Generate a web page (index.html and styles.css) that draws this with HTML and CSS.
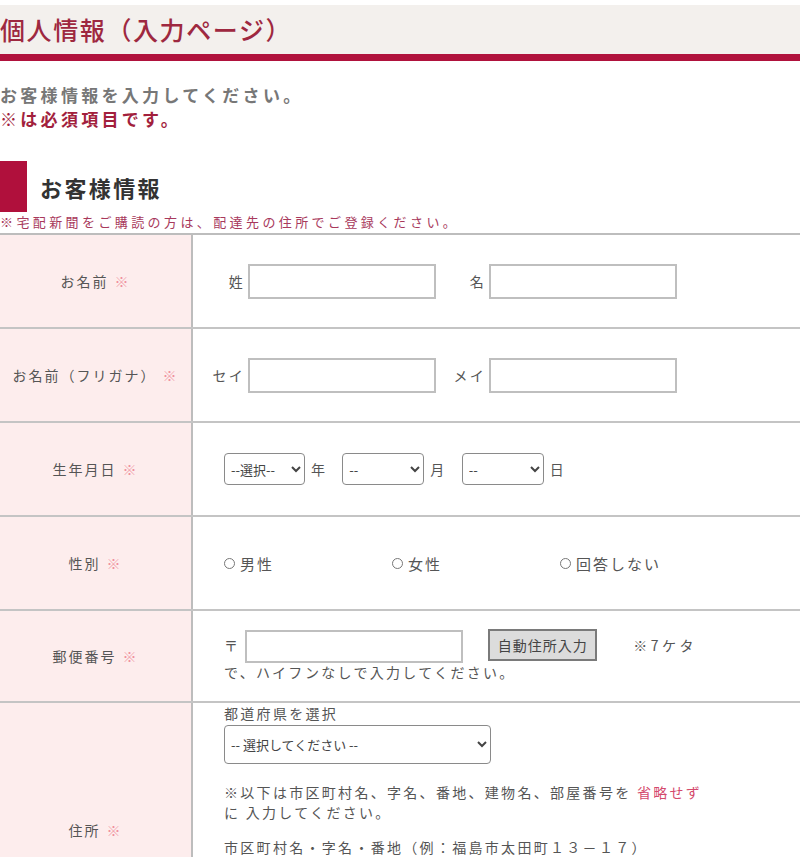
FILE: index.html
```html
<!DOCTYPE html>
<html lang="ja">
<head>
<meta charset="utf-8">
<title>個人情報（入力ページ）</title>
<link rel="stylesheet" href="styles.css">
</head>
<body>
<header class="page-head">
  <h1 class="page-title">個人情報（入力ページ）</h1>
</header>

<div class="intro">
  <p class="intro-main">お客様情報を入力してください。</p>
  <p class="intro-req">※は必須項目です。</p>
</div>

<div class="section-head">
  <span class="section-mark"></span>
  <h2 class="section-title">お客様情報</h2>
</div>
<p class="section-note">※宅配新聞をご購読の方は、配達先の住所でご登録ください。</p>

<div class="form-table">
  <div class="row">
    <div class="label">お名前<span class="req">※</span></div>
    <div class="field field-name">
      <span class="sub sub-1">姓</span><input class="text-in" type="text">
      <span class="sub sub-2">名</span><input class="text-in" type="text">
    </div>
  </div>

  <div class="row">
    <div class="label">お名前（フリガナ）<span class="req">※</span></div>
    <div class="field field-name">
      <span class="sub sub-1">セイ</span><input class="text-in" type="text">
      <span class="sub sub-2">メイ</span><input class="text-in" type="text">
    </div>
  </div>

  <div class="row">
    <div class="label">生年月日<span class="req">※</span></div>
    <div class="field field-date">
      <select class="sel sel-y"><option>--選択--</option></select><span class="unit">年</span>
      <select class="sel sel-m"><option>--</option></select><span class="unit">月</span>
      <select class="sel sel-d"><option>--</option></select><span class="unit">日</span>
    </div>
  </div>

  <div class="row">
    <div class="label">性別<span class="req">※</span></div>
    <div class="field field-radio">
      <label class="radio"><span class="dot"></span>男性</label>
      <label class="radio"><span class="dot"></span>女性</label>
      <label class="radio"><span class="dot"></span>回答しない</label>
    </div>
  </div>

  <div class="row row-zip">
    <div class="label">郵便番号<span class="req">※</span></div>
    <div class="field field-zip">
      <div class="zip-line">
        <span class="zip-mark">〒</span><input class="zip-in" type="text"><button class="zip-btn" type="button">自動住所入力</button><span class="zip-note">※7ケタ</span>
      </div>
      <p class="zip-rest">で、ハイフンなしで入力してください。</p>
    </div>
  </div>

  <div class="row row-addr">
    <div class="label">住所<span class="req">※</span></div>
    <div class="field field-addr">
      <p class="addr-cap">都道府県を選択</p>
      <select class="sel sel-pref"><option>-- 選択してください --</option></select>
      <p class="addr-note">※以下は市区町村名、字名、番地、建物名、部屋番号を <span class="pink">省略せず</span> に 入力してください。</p>
      <p class="addr-cap2">市区町村名・字名・番地（例：福島市太田町１３－１７）</p>
    </div>
  </div>
</div>
</body>
</html>
```

FILE: styles.css
```css
* { box-sizing: border-box; }

body {
  margin: 0;
  font-family: "Noto Sans CJK JP", "Noto Sans", sans-serif;
  color: #555;
  background: #fff;
}

p, h1, h2 { margin: 0; }

.page-head {
  margin-top: 5px;
  background: #f3f0ed;
  border-bottom: 7px solid #b0123d;
}

.page-title {
  height: 49px;
  line-height: 49px;
  font-size: 25px;
  font-weight: 500;
  letter-spacing: 1.6px;
  color: #9e2840;
}

.intro {
  margin-top: 22px;
  font-size: 17px;
  font-weight: bold;
  line-height: 24px;
  letter-spacing: 3.3px;
}

.intro-main { color: #777; }
.intro-req { color: #a21f3d; }

.section-head {
  margin-top: 30px;
  display: flex;
  align-items: center;
  height: 51px;
}

.section-mark {
  width: 27px;
  height: 51px;
  background: #b0103c;
}

.section-title {
  margin-left: 13px;
  font-size: 22px;
  font-weight: bold;
  letter-spacing: 2.4px;
  color: #333;
}

.section-note {
  font-size: 13px;
  line-height: 20px;
  letter-spacing: 3.4px;
  color: #a8395c;
}

.form-table {
  margin-top: 1px;
  border-top: 2px solid #bdbdbd;
}

.row {
  display: grid;
  grid-template-columns: 193px 1fr;
  height: 94px;
  border-bottom: 2px solid #c4c4c4;
}

.label {
  background: #fdeded;
  border-right: 2px solid #bdbdbd;
  display: flex;
  align-items: center;
  justify-content: center;
  font-size: 14px;
  letter-spacing: 2px;
  color: #555;
}

.req {
  margin-left: 6px;
  color: #f0909f;
}

.field {
  display: flex;
  align-items: center;
  font-size: 14px;
  letter-spacing: 2.3px;
  color: #555;
}

.field-name { padding-left: 18px; }

.sub {
  display: inline-block;
  text-align: right;
  color: #555;
}

.sub-1 { width: 34px; }
.sub-2 { width: 50px; }

.text-in {
  margin-left: 3px;
  width: 188px;
  height: 35px;
  border: 2px solid #bfbfbf;
  background: #fff;
  outline: none;
}

.field-date { padding-left: 31px; }

.sel {
  height: 32px;
  font-family: "Noto Sans CJK JP", "Noto Sans", sans-serif;
  font-size: 13px;
  letter-spacing: 0;
  color: #444;
  background: #fff;
  border: 1px solid #8a8a8a;
  border-radius: 4px;
  padding: 0 2px;
}

.sel-y { width: 81px; }
.sel-m, .sel-d { width: 82px; }

.unit {
  margin-left: 6px;
  margin-right: 15px;
}

.field-radio { padding-left: 31px; }

.radio {
  display: inline-flex;
  align-items: center;
  width: 168px;
  font-size: 15px;
  letter-spacing: 2px;
  color: #555;
}

.dot {
  display: inline-block;
  width: 11px;
  height: 11px;
  margin-right: 5px;
  border: 1px solid #777;
  border-radius: 50%;
}

.row-zip { height: 92px; }

.field-zip {
  flex-direction: column;
  align-items: flex-start;
  padding: 16px 0 0 31px;
}

.zip-line {
  display: flex;
  align-items: center;
  height: 36px;
}

.zip-in {
  margin-left: 5px;
  width: 218px;
  height: 33px;
  margin-top: 2px;
  border: 2px solid #bfbfbf;
  background: #fff;
  outline: none;
}

.zip-btn {
  margin-left: 25px;
  width: 109px;
  height: 32px;
  font-family: "Noto Sans CJK JP", "Noto Sans", sans-serif;
  font-size: 14px;
  letter-spacing: 1px;
  color: #444;
  background: #dcdcdc;
  border: 2px solid #7a7a7a;
  padding: 0;
}

.zip-note {
  margin-left: 36px;
  letter-spacing: 3.5px;
}

.zip-rest {
  margin-top: -1px;
  line-height: 20px;
}

.row-addr { height: 256px; }

.field-addr {
  flex-direction: column;
  align-items: flex-start;
  padding: 0 0 0 31px;
}

.addr-cap { line-height: 20px; }

.sel-pref {
  margin-top: 2px;
  width: 267px;
  height: 39px;
}

.addr-note {
  margin-top: 18px;
  width: 492px;
  line-height: 20px;
}

.pink { color: #d4496c; }

.addr-cap2 {
  margin-top: 15px;
  line-height: 20px;
}
```
